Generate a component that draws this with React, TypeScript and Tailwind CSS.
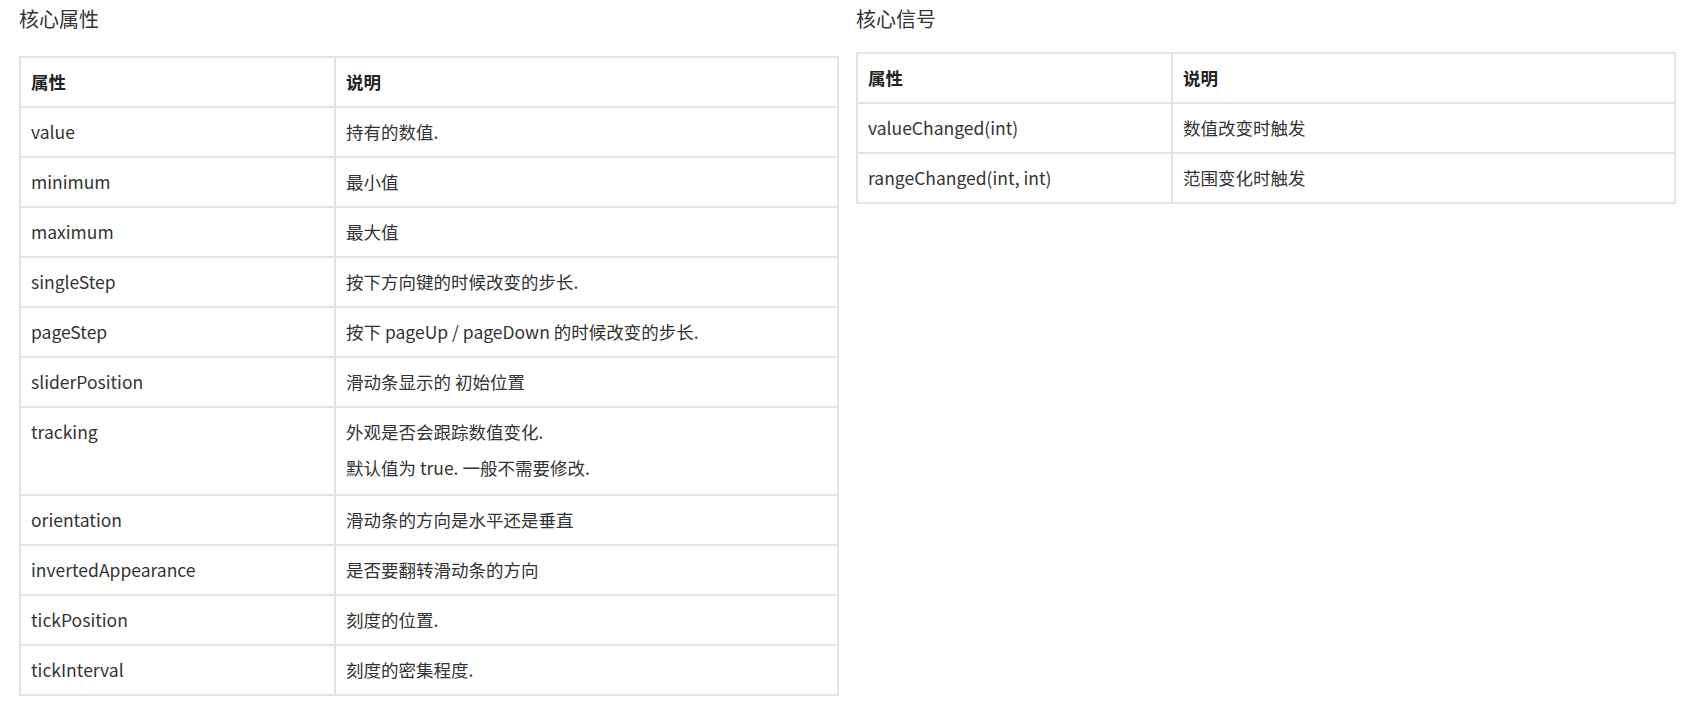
import React from "react";

type Row = { name: string; desc: string[] };

const propertyRows: Row[] = [
  { name: "value", desc: ["持有的数值."] },
  { name: "minimum", desc: ["最小值"] },
  { name: "maximum", desc: ["最大值"] },
  { name: "singleStep", desc: ["按下方向键的时候改变的步长."] },
  { name: "pageStep", desc: ["按下 pageUp / pageDown 的时候改变的步长."] },
  { name: "sliderPosition", desc: ["滑动条显示的 初始位置"] },
  { name: "tracking", desc: ["外观是否会跟踪数值变化.", "默认值为 true. 一般不需要修改."] },
  { name: "orientation", desc: ["滑动条的方向是水平还是垂直"] },
  { name: "invertedAppearance", desc: ["是否要翻转滑动条的方向"] },
  { name: "tickPosition", desc: ["刻度的位置."] },
  { name: "tickInterval", desc: ["刻度的密集程度."] },
];

const signalRows: Row[] = [
  { name: "valueChanged(int)", desc: ["数值改变时触发"] },
  { name: "rangeChanged(int, int)", desc: ["范围变化时触发"] },
];

// one table used by both sections
function PropTable({ rows }: { rows: Row[] }) {
  return (
    <table className="w-[820px] table-fixed border-collapse border-2 border-[#e1e2e7] text-[17.5px] text-[#333]">
      <colgroup>
        <col className="w-[315px]" />
        <col />
      </colgroup>
      <thead>
        <tr>
          <th className="border-2 border-[#e1e2e7] px-[10px] py-[11px] text-left font-bold leading-[26px] text-[#222]">属性</th>
          <th className="border-2 border-[#e1e2e7] px-[10px] py-[11px] text-left font-bold leading-[26px] text-[#222]">说明</th>
        </tr>
      </thead>
      <tbody>
        {rows.map((row) => (
          <tr key={row.name}>
            <td className="border-2 border-[#e1e2e7] px-[10px] pt-[11px] pb-[11px] align-top leading-[26px]">{row.name}</td>
            <td className="border-2 border-[#e1e2e7] px-[10px] pt-[11px] pb-[11px] align-top leading-[26px]">
              {row.desc.map((line, i) => (
                <p key={i} className={i > 0 ? "mt-[10px] mb-[2px]" : ""}>
                  {line}
                </p>
              ))}
            </td>
          </tr>
        ))}
      </tbody>
    </table>
  );
}

export default function App() {
  return (
    <div
      className="min-h-screen bg-white pl-[19px] pt-[5px]"
      style={{ fontFamily: '"Noto Sans CJK SC", "Noto Sans", sans-serif' }}
    >
      <div className="flex items-start gap-[17px]">
        {/* 核心属性 */}
        <section>
          <h2 className="mb-[23px] text-[20px] leading-[28px] font-normal text-[#333]">核心属性</h2>
          <PropTable rows={propertyRows} />
        </section>

        {/* 核心信号 */}
        <section>
          <h2 className="mb-[19px] text-[20px] leading-[28px] font-normal text-[#333]">核心信号</h2>
          <PropTable rows={signalRows} />
        </section>
      </div>
    </div>
  );
}
